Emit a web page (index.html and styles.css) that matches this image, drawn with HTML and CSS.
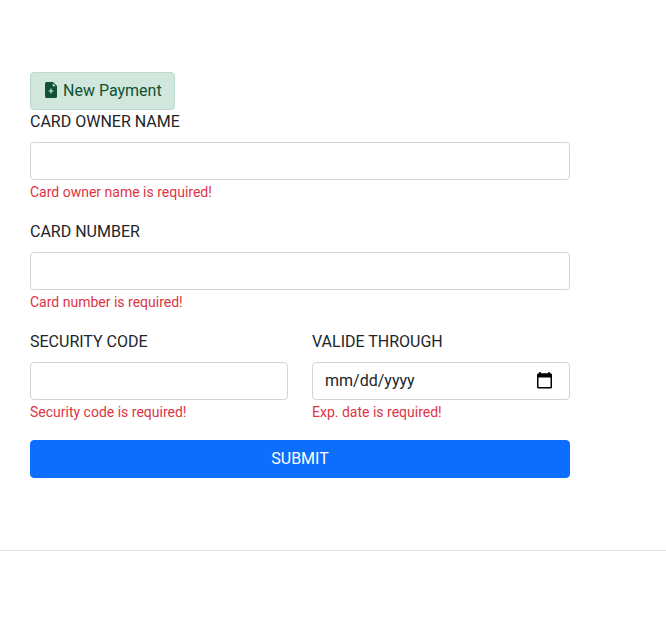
FILE: index.html
```html
<!DOCTYPE html>
<html lang="en">
<head>
<meta charset="utf-8">
<title>Payment</title>
<link rel="stylesheet" href="styles.css">
</head>
<body>
<main class="payment">
  <div class="alert">
    <svg class="alert-icon" width="16" height="16" viewBox="0 0 16 16" fill="currentColor"><path fill-rule="evenodd" d="M10 0H3.500A1.500 1.500 0 0 0 2 1.500v13A1.500 1.500 0 0 0 3.500 16h9a1.500 1.500 0 0 0 1.500-1.500V4zM9.800 1.300v2.900H12.700zM7.400 6.500h1.200v1.900h1.900v1.200H8.600v1.900H7.400V9.600H5.500V8.400h1.900z"/></svg>
    <span>New Payment</span>
  </div>
  <form class="form">
    <div class="field">
      <label class="label" for="owner">CARD OWNER NAME</label>
      <input class="control" id="owner" type="text">
      <small class="error">Card owner name is required!</small>
    </div>
    <div class="field">
      <label class="label" for="number">CARD NUMBER</label>
      <input class="control" id="number" type="text">
      <small class="error">Card number is required!</small>
    </div>
    <div class="row">
      <div class="field">
        <label class="label" for="code">SECURITY CODE</label>
        <input class="control" id="code" type="text">
        <small class="error">Security code is required!</small>
      </div>
      <div class="field">
        <label class="label" for="date">VALIDE THROUGH</label>
        <div class="control date" id="date">
          <span>mm/dd/yyyy</span>
          <svg class="calendar" width="15" height="17" viewBox="0 0 15 17"><path fill-rule="evenodd" d="M2.200 0h1.600v1.300h7.400V0h1.600v1.300h.7A1.500 1.500 0 0 1 15 2.800v12.200a1.500 1.500 0 0 1-1.500 1.500h-12A1.500 1.500 0 0 1 0 15V2.800a1.500 1.500 0 0 1 1.500-1.500h.7zM1.500 5.500v9.500h12V5.500z"/></svg>
        </div>
        <small class="error">Exp. date is required!</small>
      </div>
    </div>
    <button class="submit" type="button">SUBMIT</button>
  </form>
</main>
<hr class="divider">
</body>
</html>
```
FILE: styles.css
```css
* { box-sizing: border-box; }
body {
  margin: 0;
  background: #fff;
  color: #212529;
  font: 400 16px/24px Roboto, sans-serif;
}
.payment {
  width: 540px;
  margin: 72px 0 72px 30px;
}
.alert {
  display: flex;
  align-items: center;
  gap: 4px;
  width: 145px;
  height: 38px;
  padding: 0 12px;
  border: 1px solid #badbcc;
  border-radius: 4px;
  background: #d1e7dd;
  color: #0f5132;
  white-space: nowrap;
}
.alert-icon { flex: none; margin-bottom: 2px; }
.form { display: block; }
.field {
  flex: 1;
  min-width: 0;
  height: 110px;
}
.row { display: flex; gap: 24px; }
.label { display: block; margin-bottom: 8px; }
.control {
  display: block;
  width: 100%;
  height: 38px;
  padding: 6px 12px;
  border: 1px solid #ced4da;
  border-radius: 4px;
  background: #fff;
  color: #212529;
  font: inherit;
}
.date {
  display: flex;
  align-items: center;
  justify-content: space-between;
}
.calendar { margin: 0 5px 1px 0; }
.error {
  display: block;
  color: #dc3545;
  font-size: 14px;
}
.submit {
  display: block;
  width: 100%;
  height: 38px;
  border: 1px solid #0d6efd;
  border-radius: 4px;
  background: #0d6efd;
  color: #fff;
  font: inherit;
}
.divider {
  margin: 0;
  border: 0;
  border-top: 1px solid #dee2e6;
}
```
